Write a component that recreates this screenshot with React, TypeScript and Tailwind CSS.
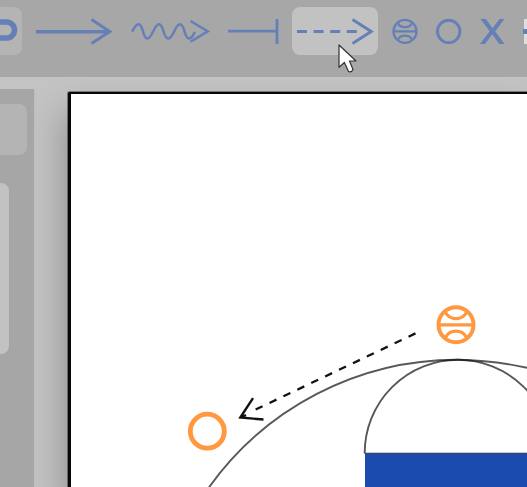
import type { ReactNode } from "react";

function Tool({ label, className, children }: { label: string; className: string; children: ReactNode }) {
  return (
    <button aria-label={label} className={`flex h-12 shrink-0 items-center justify-center rounded-lg text-[#6480b6] ${className}`}>
      {children}
    </button>
  );
}

function Toolbar() {
  return (
    <header className="flex h-[77px] shrink-0 overflow-hidden bg-[#a7a7a7] pt-[7px]">
      <Tool label="Handoff" className="w-[22px] rounded-l-none bg-[#b4b4b4]">
        <svg width="22" height="48" viewBox="0 0 22 48" fill="none" stroke="currentColor" strokeWidth="5.6">
          <path d="M-6 15H6.5a8 8 0 0 1 0 16H-6" />
        </svg>
      </Tool>
      <Tool label="Move" className="ml-[13px] w-[78px]">
        <svg width="78" height="48" viewBox="0 0 78 48" fill="none" stroke="currentColor" strokeWidth="3">
          <path strokeWidth="3.6" d="M1 24.7H75" />
          <path d="M56.5 12.5L74.8 24.5L56.5 36.5" />
        </svg>
      </Tool>
      <Tool label="Dribble" className="ml-[18px] w-[79px]">
        <svg width="79" height="48" viewBox="0 0 79 48" fill="none" stroke="currentColor" strokeWidth="2.5">
          <path d="M1 24.7C3.5 21.5 4.5 17.3 7.5 17.3C12.5 17.3 11.5 31.5 16.3 31.5C21.5 31.5 23 17.3 28 17.3C33 17.3 32 31.5 37.3 31.5C42.5 31.5 44 17.3 49 17.3C54 17.3 53 31.5 58 31.5C61.5 31.5 62 27.5 64 25M59.5 14L76.8 24.4L59.5 34.8" />
        </svg>
      </Tool>
      <Tool label="Screen" className="ml-4 w-14">
        <svg width="56" height="48" viewBox="0 0 56 48" fill="none" stroke="currentColor" strokeWidth="2.8">
          <path d="M2 24.2H51M51 12V37" />
        </svg>
      </Tool>
      <Tool label="Pass" className="ml-[10px] w-[86px] bg-[#c2c2c2] text-[#1c50b5]">
        <svg width="86" height="48" viewBox="0 0 86 48" fill="none" stroke="currentColor" strokeWidth="3">
          <path strokeDasharray="10 6.6" d="M5 24.4H65" />
          <path d="M60.5 12.4L79.2 24.4L60.5 36.6" />
        </svg>
      </Tool>
      <Tool label="Ball" className="ml-[14px] w-[26px]">
        <svg width="26" height="26" viewBox="0 0 26 26" fill="none" stroke="currentColor" strokeWidth="2.3">
          <circle cx="13" cy="13.4" r="11.5" />
          <path d="M1.8 13.4H24.2M6.3 5.3C8 10.4 18 10.4 19.7 5.3M6.3 21.5C8 16.4 18 16.4 19.7 21.5" />
        </svg>
      </Tool>
      <Tool label="Player" className="ml-[18px] w-[26px]">
        <svg width="26" height="26" viewBox="0 0 26 26" fill="none" stroke="currentColor" strokeWidth="2.9">
          <circle cx="12.7" cy="13.5" r="11.2" />
        </svg>
      </Tool>
      <Tool label="Defender" className="ml-[18px] w-[25px]">
        <svg width="25" height="26" viewBox="0 0 25 26" fill="currentColor">
          <path d="M.5 1H5.8L12.5 10.3L19.5 1H24.5L15.2 13.2L24.5 26H19.2L12.3 16.2L5 26H0L9.7 13.2Z" />
        </svg>
      </Tool>
      <Tool label="Line color" className="ml-[18px] w-[6px]">
        <svg width="6" height="26" viewBox="0 0 6 26">
          <path fill="#dedede" d="M1 1H6V26H1Z" />
          <path fill="currentColor" d="M0 11H6V16H0Z" />
        </svg>
      </Tool>
    </header>
  );
}

function Court() {
  return (
    <main className="relative mt-[15px] ml-[33px] flex-1 overflow-hidden rounded-tl-[2px] border-t-2 border-l-[3px] border-[#080808] bg-white shadow-[0_0_0_1px_#00000060,-4px_20px_34px_#00000040]">
      <svg className="block" width="456" height="393" viewBox="71 94 456 393" fill="none">
        <path fill="#1c4bae" d="M365 453.2H527V487H365Z" />
        <g stroke="#111" strokeOpacity=".7" strokeWidth="1.9">
          <path d="M207.5 489.5A305 305 0 0 1 458 359.8Q493 360.4 527 367.7" />
          <path d="M364.7 453A93.3 93.3 0 0 1 551.3 453" />
          <path strokeWidth="1" d="M364 453.2H527" />
        </g>
        <path stroke="#111" strokeWidth="2.3" strokeDasharray="7.7 7.7" d="M415.5 333.4L252 411.3" />
        <path stroke="#111" strokeWidth="2.4" d="M253 398.2L240.3 417.5L263.5 419.5M240.3 417.5L246 415" />
        <circle cx="207.3" cy="431.2" r="17" stroke="#ff983f" strokeWidth="4.8" />
        <g stroke="#ff983f">
          <circle cx="456" cy="324.8" r="17.5" strokeWidth="4" />
          <path strokeWidth="3.2" d="M439 324.8H473M445.5 312.5C450 320.6 462 320.6 466.5 312.5M445.5 337.2C450 329 462 329 466.5 337.2" />
        </g>
      </svg>
    </main>
  );
}

export default function App() {
  return (
    <div className="relative flex h-[487px] w-[527px] flex-col overflow-hidden bg-[#c3c3c3] font-['Liberation_Sans',sans-serif]">
      <Toolbar />
      <div className="flex min-h-0 flex-1">
        <aside className="relative z-10 mt-[12px] w-[35px] shrink-0 border-r border-[#bdbdbd] bg-[#a6a6a6] pt-[15px]">
          <div className="h-[51px] w-[27px] rounded-r-lg bg-[#b4b4b4]" />
          <div className="mt-7 h-[171px] w-[9px] rounded-r-lg bg-[#c2c2c2]" />
        </aside>
        <Court />
      </div>
      <svg className="pointer-events-none absolute top-[44px] left-[338px]" width="20" height="31" viewBox="0 0 20 31">
        <path fill="white" stroke="#333" strokeWidth="1.2" strokeLinejoin="round" d="M1 1V23.3L6.4 18.5L10.5 27.5Q13.5 28.8 15 25.5L11.5 17H18Z" />
      </svg>
    </div>
  );
}
